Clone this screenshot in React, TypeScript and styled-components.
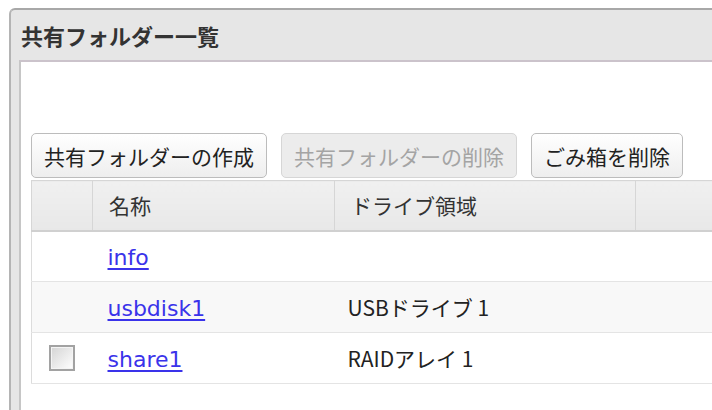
import React from 'react';
import styled, { createGlobalStyle } from 'styled-components';

const GlobalStyle = createGlobalStyle`
  html, body {
    margin: 0;
    padding: 0;
    background: #ffffff;
    overflow: hidden;
  }
  body {
    font-family: "Noto Sans CJK JP", sans-serif;
    color: #222;
  }
`;

const Page = styled.div`
  padding: 8px 0 0 9px;
  width: 712px;
  height: 410px;
  box-sizing: border-box;
  overflow: hidden;
`;

const Panel = styled.section`
  background: #e6e6e6;
  border-top: 2px solid #a8a8a8;
  border-left: 2px solid #b4b4b4;
  border-top-left-radius: 6px;
  padding-left: 8px;
  height: 100%;
  box-sizing: border-box;
`;

const PanelTitle = styled.h2`
  margin: 0;
  height: 50px;
  display: flex;
  align-items: center;
  padding-left: 2px;
  font-size: 22px;
  font-weight: bold;
  color: #333;
  white-space: nowrap;
`;

const Content = styled.div`
  background: #fff;
  border-top: 2px solid #cbc3cb;
  border-left: 2px solid #c6c6c6;
  padding: 71px 0 0 10px;
  height: 100%;
  box-sizing: border-box;
`;

const Toolbar = styled.div`
  display: flex;
  gap: 14px;
  margin-bottom: 2px;
`;

const Button = styled.button<{ $disabled?: boolean }>`
  height: 45px;
  padding: 0 12px;
  border: 1px solid ${(p) => (p.$disabled ? '#d6d6d6' : '#bcbcbc')};
  border-radius: 5px;
  background: ${(p) =>
    p.$disabled ? '#ececec' : 'linear-gradient(#ffffff, #eeeeee)'};
  color: ${(p) => (p.$disabled ? '#a4a4a4' : '#222')};
  font-family: "Noto Sans CJK JP", sans-serif;
  font-size: 21px;
  white-space: nowrap;
  flex-shrink: 0;
  cursor: ${(p) => (p.$disabled ? 'default' : 'pointer')};
`;

const Table = styled.table`
  border-collapse: collapse;
  table-layout: fixed;
  width: 904px;
`;

const HeadCell = styled.th<{ $w: number }>`
  box-sizing: border-box;
  width: ${(p) => p.$w}px;
  height: 50px;
  padding: 0 0 0 16px;
  text-align: left;
  font-size: 21px;
  font-weight: normal;
  color: #333;
  background: linear-gradient(#f0f0f0, #e8e8e8);
  border: 1px solid #d6d6d6;
  border-bottom: 2px solid #d0d0d0;
`;

const Row = styled.tr<{ $alt?: boolean }>`
  height: 51px;
  background: ${(p) => (p.$alt ? '#f8f8f8' : '#ffffff')};
  border-bottom: 1px solid #e4e4e4;
  border-left: 1px solid #dcdcdc;
`;

const Cell = styled.td`
  box-sizing: border-box;
  padding: 0 0 0 13px;
  font-size: 21px;
  color: #222;
  white-space: nowrap;
`;

const CheckCell = styled.td`
  box-sizing: border-box;
  padding: 0 0 0 17px;
`;

const Check = styled.span`
  display: block;
  width: 22px;
  height: 22px;
  border: 2px solid #a2a2a2;
  background: linear-gradient(135deg, #d4d4d4, #ffffff);
  box-shadow: inset 0 0 0 1px #f4f4f4;
`;

const FolderLink = styled.a`
  display: inline-block;
  margin-left: 2px;
  color: #3a33ea;
  text-decoration: underline;
  text-decoration-thickness: 2px;
  text-underline-offset: 3px;
  font-family: "DejaVu Sans", sans-serif;
  font-size: 22px;
`;

type Folder = { name: string; drive: string; checkable: boolean };

const folders: Folder[] = [
  { name: 'info', drive: '', checkable: false },
  { name: 'usbdisk1', drive: 'USBドライブ 1', checkable: false },
  { name: 'share1', drive: 'RAIDアレイ 1', checkable: true },
];

export default function App() {
  return (
    <Page>
      <GlobalStyle />
      <Panel>
        <PanelTitle>共有フォルダー一覧</PanelTitle>
        <Content>
          <Toolbar>
            <Button>共有フォルダーの作成</Button>
            <Button $disabled disabled>
              共有フォルダーの削除
            </Button>
            <Button>ごみ箱を削除</Button>
          </Toolbar>
          <Table>
            <thead>
              <tr>
                <HeadCell $w={61} />
                <HeadCell $w={242}>名称</HeadCell>
                <HeadCell $w={301}>ドライブ領域</HeadCell>
                <HeadCell $w={300} />
              </tr>
            </thead>
            <tbody>
              {folders.map((f, i) => (
                <Row key={f.name} $alt={i % 2 === 1}>
                  <CheckCell>{f.checkable && <Check />}</CheckCell>
                  <Cell>
                    <FolderLink href="#">{f.name}</FolderLink>
                  </Cell>
                  <Cell>{f.drive}</Cell>
                  <Cell />
                </Row>
              ))}
            </tbody>
          </Table>
        </Content>
      </Panel>
    </Page>
  );
}
